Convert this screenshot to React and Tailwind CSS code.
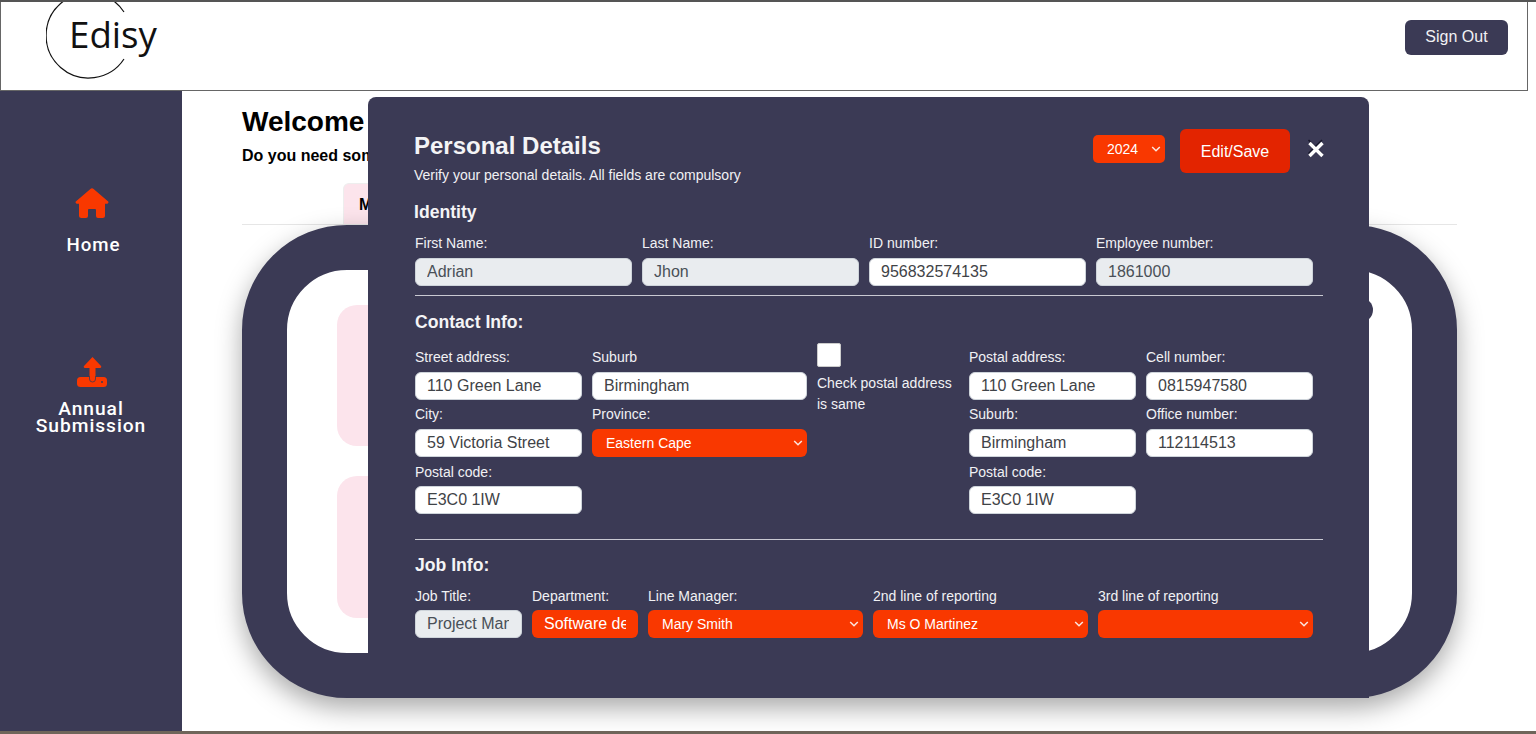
import React from "react";

const inputBase =
  "block w-full h-7 rounded-md border border-[#ced4da] pl-[11px] pr-[12px] text-[16px] leading-[26px] outline-none";

function Label({ children, tall }) {
  return (
    <div
      className={`h-5 text-[14px] leading-5 text-[#f1f1f4] whitespace-nowrap ${
        tall ? "mb-[4px] mt-[1px]" : "mb-[5px]"
      }`}
    >
      {children}
    </div>
  );
}

function TextField({ label, value, disabled, tall }) {
  return (
    <div>
      <Label tall={tall}>{label}</Label>
      <input
        readOnly
        value={value}
        className={`${inputBase} ${disabled ? "bg-[#e9ecef] text-[#495057]" : "bg-white text-[#3f4347]"}`}
      />
    </div>
  );
}

function OrangeInput({ label, value, tall }) {
  return (
    <div>
      <Label tall={tall}>{label}</Label>
      <input
        readOnly
        value={value}
        className="block w-full h-7 rounded-md bg-[#f93800] pl-[12px] pr-[12px] text-[16px] text-white outline-none"
      />
    </div>
  );
}

function Chevron() {
  return (
    <svg
      width="10"
      height="6"
      viewBox="0 0 10 6"
      fill="none"
      className="pointer-events-none absolute right-[4px] top-[11px]"
    >
      <path d="M1.2 1 L5 4.8 L8.8 1" stroke="#fbe6df" strokeWidth="1.5" />
    </svg>
  );
}

function SelectField({ label, value, tall }) {
  return (
    <div>
      <Label tall={tall}>{label}</Label>
      <div className="relative h-7 w-full">
        <select
          defaultValue={value}
          className="block h-full w-full appearance-none rounded-md bg-[#f93800] pl-[14px] text-[14px] text-white outline-none"
        >
          <option value={value}>{value}</option>
        </select>
        <Chevron />
      </div>
    </div>
  );
}

export default function App() {
  return (
    <div className="relative flex flex-col h-[734px] w-[1536px] overflow-hidden bg-white font-['Liberation_Sans',Arial,sans-serif]">
      <div className="h-[2px] shrink-0 bg-[#555555]" />

      {/* Header */}
      <header className="flex h-[89px] w-[1528px] shrink-0 items-center justify-between overflow-hidden border-x border-b border-[#666666] bg-white pl-[45px] pr-[19px]">
        <div className="relative h-full w-[120px]">
          <svg className="absolute left-0 top-0" width="90" height="89" viewBox="0 0 90 89" fill="none">
            <path d="M78 10 A42.5 42.5 0 1 0 78 57" stroke="#111111" strokeWidth="1.2" />
          </svg>
          <span className="absolute left-[23px] top-[7px] font-['Open_Sans',sans-serif] text-[36.7px] font-normal leading-[50px] text-[#111111]">
            Edisy
          </span>
        </div>
        <button className="-mt-[18px] h-[35px] w-[103px] rounded-md bg-[#3b3a55] text-[16px] text-[#f1f1f4]">
          Sign Out
        </button>
      </header>

      <div className="flex min-h-0 flex-1">
        {/* Sidebar */}
        <aside className="flex w-[182px] shrink-0 flex-col items-center bg-[#3b3a55] pt-[97px] font-['Roboto',sans-serif] text-white">
          <svg width="34" height="31" viewBox="0 0 34 31" className="ml-[1px]">
            <path
              fill="#f93800"
              d="M15.4 1 a2.3 2.3 0 0 1 3.2 0 L32.6 13 a1.5 1.5 0 0 1 -1 2.8 H30 V27.5 a2.5 2.5 0 0 1 -2.5 2.5 H23 a2 2 0 0 1 -2 -2 V22 a1 1 0 0 0 -1 -1 H14 a1 1 0 0 0 -1 1 V28 a2 2 0 0 1 -2 2 H6.5 A2.5 2.5 0 0 1 4 27.5 V15.8 H2.4 a1.5 1.5 0 0 1 -1 -2.8 Z"
            />
          </svg>
          <div className="ml-[5px] mt-[14px] text-[18.7px] font-medium leading-6 tracking-[0.05em]">Home</div>
          <svg width="30" height="31" viewBox="0 0 30 31" className="mt-[100px] ml-[1px]">
            <path fill="#f93800" d="M15.5 0 L24 9 a1.2 1.2 0 0 1 -1 2 H18.5 V20 h-6 V11 H8 a1.2 1.2 0 0 1 -1 -2 Z" />
            <rect x="0" y="20" width="30" height="10" rx="3.5" fill="#f93800" />
            <path d="M12.5 19 V22 a3 3 0 0 0 6 0 V19" fill="#f93800" stroke="#3b3a55" strokeWidth="0.8" />
            <circle cx="25" cy="25" r="1" fill="#3b3a55" />
          </svg>
          <div className="mt-[12px] text-center text-[19.2px] font-medium leading-[17px] tracking-[0.05em]">
            Annual
            <br />
            Submission
          </div>
        </aside>

        {/* Page behind the dialog */}
        <main className="min-w-0 flex-1 pl-[60px] pt-[15px]">
          <h1 className="text-[28px] font-bold leading-8 text-black">Welcome to your dashboard</h1>
          <p className="mt-[8px] text-[16px] font-bold leading-5 text-black">Do you need some help?</p>
          <div className="mt-[17px] w-[1215px] border-b border-[#e6e6e6]">
            <div className="ml-[101px] h-[41px] w-[160px] rounded-t-md border border-b-0 border-[#eeeeee] bg-[#fce4ec] pl-[15px] text-[16px] font-bold leading-[42px] text-black">
              My Details
            </div>
          </div>
          <div className="relative h-[473px] w-[1215px] rounded-[105px] border-[45px] border-[#3b3a55] bg-white pl-[50px] pr-[50px] pt-[35px] shadow-[0_10px_26px_rgba(0,0,0,0.34)]">
            <div className="h-[141px] rounded-[20px] bg-[#fce4ec]" />
            <div className="mt-[30px] h-[142px] rounded-[20px] bg-[#fce4ec]" />
            <div className="absolute left-[1062px] top-[28px] h-6 w-6 rounded-full bg-[#3b3a55]" />
          </div>
        </main>
      </div>

      <div className="h-[3px] shrink-0 bg-[#6f655a]" />

      {/* Dialog */}
      <section className="absolute left-[368px] top-[97px] h-[601px] w-[1001px] rounded-t-lg bg-[#3b3a55] pl-[47px] pr-[46px] pt-[32px] text-white">
        <div className="flex items-start justify-between">
          <div className="-ml-[1px]">
            <h2 className="mt-[2px] text-[24px] font-bold leading-[30px] text-[#f4f4f6]">Personal Details</h2>
            <p className="mt-[4px] text-[14px] leading-5 text-[#f1f1f4]">
              Verify your personal details. All fields are compulsory
            </p>
          </div>
          <div className="-mr-[1px] flex items-start">
            <div className="relative mt-[6px] h-7 w-[72px]">
              <select
                defaultValue="2024"
                className="block h-full w-full appearance-none rounded-[5px] bg-[#f93800] pl-[14px] text-[14px] text-white outline-none"
              >
                <option value="2024">2024</option>
              </select>
              <Chevron />
            </div>
            <button className="ml-[15px] h-[44px] w-[110px] rounded-md bg-[#e32400] pt-[1px] text-[16px] text-white">
              Edit/Save
            </button>
            <svg width="16" height="20" viewBox="0 0 16 20" className="ml-[18px] mt-[10px]">
              <path d="M0.5 1 L14 14.5 M14 1 L0.5 14.5" stroke="#17172a" strokeWidth="1.5" />
              <path d="M1.5 4 L14.5 17 M14.5 4 L1.5 17" stroke="#ffffff" strokeWidth="3.4" />
            </svg>
          </div>
        </div>

        <h3 className="-ml-[1px] mt-[15px] text-[17.6px] font-bold leading-6 text-[#f4f4f6]">Identity</h3>
        <div className="mt-[9px] grid w-[898px] grid-cols-4 gap-x-[10px]">
          <TextField label="First Name:" value="Adrian" disabled />
          <TextField label="Last Name:" value="Jhon" disabled />
          <TextField label="ID number:" value="956832574135" />
          <TextField label="Employee number:" value="1861000" disabled />
        </div>

        <div className="mt-[9px] h-px bg-[#c9c9d2]" />
        <h3 className="mt-[14px] text-[17.6px] font-bold leading-6 text-[#f4f4f6]">Contact Info:</h3>

        <div className="mt-[13px] grid w-[898px] grid-cols-[167px_215px_142px_167px_167px] gap-x-[10px] gap-y-[4px]">
          <TextField label="Street address:" value="110 Green Lane" />
          <TextField label="Suburb" value="Birmingham" />
          <div className="row-span-3 -mt-[4px]">
            <div className="h-6 w-6 rounded-[2px] border border-[#cccccc] bg-white" />
            <p className="mt-[6px] text-[14px] leading-[21px] text-[#f1f1f4]">Check postal address is same</p>
          </div>
          <TextField label="Postal address:" value="110 Green Lane" />
          <TextField label="Cell number:" value="0815947580" />

          <TextField label="City:" value="59 Victoria Street" />
          <SelectField label="Province:" value="Eastern Cape" />
          <TextField label="Suburb:" value="Birmingham" />
          <TextField label="Office number:" value="112114513" />

          <TextField label="Postal code:" value="E3C0 1IW" tall />
          <div />
          <TextField label="Postal code:" value="E3C0 1IW" tall />
          <div />
        </div>

        <div className="mt-[25px] h-px bg-[#c9c9d2]" />
        <h3 className="mt-[13px] text-[17.6px] font-bold leading-6 text-[#f4f4f6]">Job Info:</h3>

        <div className="mt-[8px] grid w-[898px] grid-cols-[107px_106px_215px_215px_215px] gap-x-[10px]">
          <TextField label="Job Title:" value="Project Manager" disabled tall />
          <OrangeInput label="Department:" value="Software development" tall />
          <SelectField label="Line Manager:" value="Mary Smith" tall />
          <SelectField label="2nd line of reporting" value="Ms O Martinez" tall />
          <SelectField label="3rd line of reporting" value="" tall />
        </div>
      </section>
    </div>
  );
}
